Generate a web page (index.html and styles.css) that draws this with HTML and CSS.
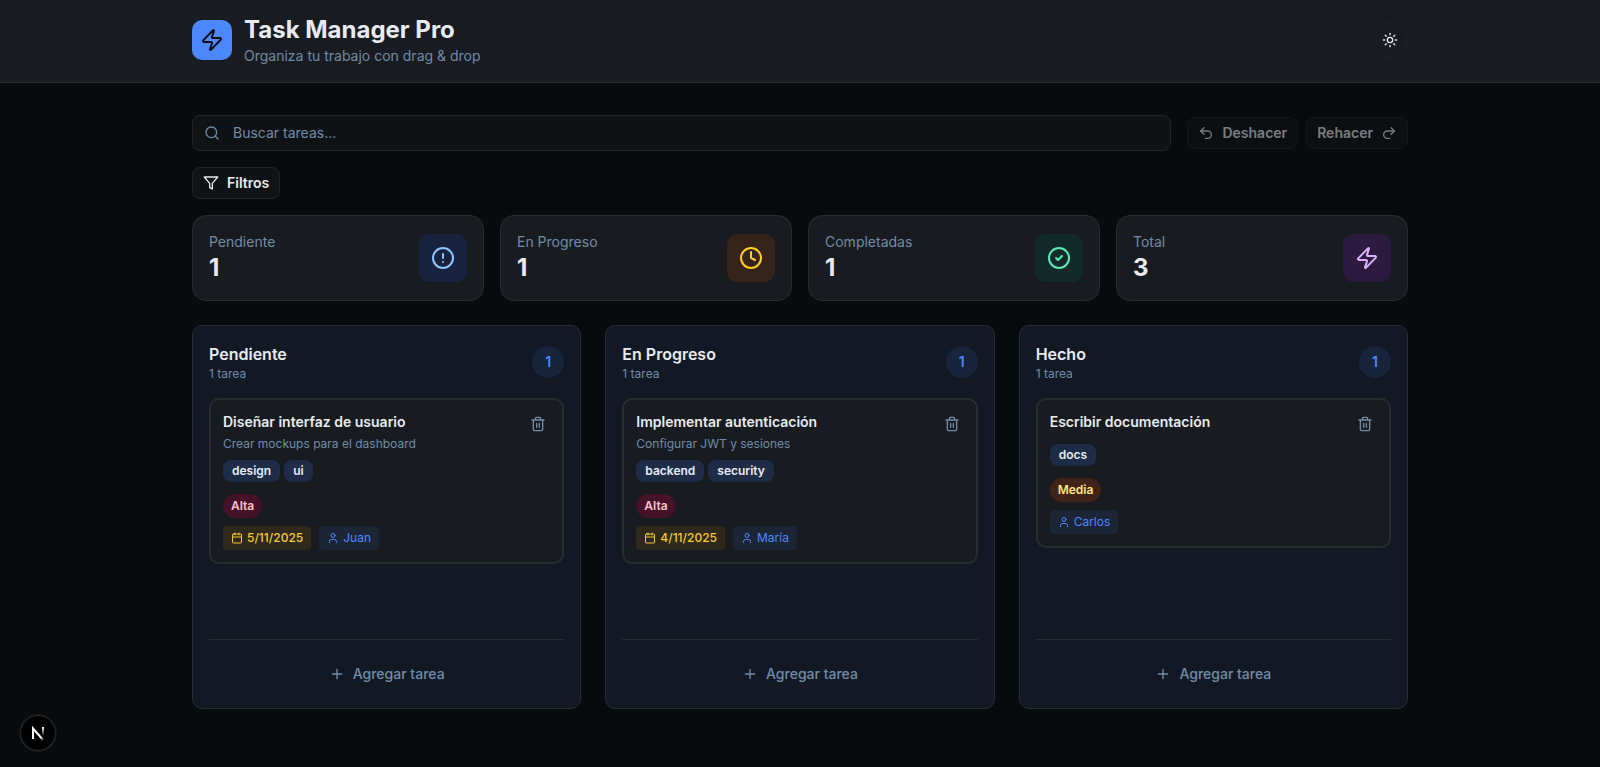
FILE: index.html
```html
<!DOCTYPE html>
<html lang="es">
<head>
    <meta charset="UTF-8">
    <meta name="viewport" content="width=device-width, initial-scale=1.0">
    <title>Task Manager Pro</title>
    <link rel="stylesheet" href="styles.css">
</head>
<body>
    <!-- Icons shared by the page -->
    <svg class="sprite" aria-hidden="true">
        <symbol id="zap" viewBox="0 0 24 24"><path d="M4 14a1 1 0 0 1-.78-1.63l9.9-10.2a.5.5 0 0 1 .86.46l-1.92 6.02A1 1 0 0 0 13 10h7a1 1 0 0 1 .78 1.63l-9.9 10.2a.5.5 0 0 1-.86-.46l1.92-6.02A1 1 0 0 0 11 14z"/></symbol>
        <symbol id="trash" viewBox="0 0 24 24"><path d="M3 6h18M19 6v14a2 2 0 0 1-2 2H7a2 2 0 0 1-2-2V6M8 6V4a2 2 0 0 1 2-2h4a2 2 0 0 1 2 2v2M10 11v6M14 11v6"/></symbol>
        <symbol id="calendar" viewBox="0 0 24 24"><path d="M8 2v4M16 2v4M3 10h18"/><rect x="3" y="4" width="18" height="18" rx="2"/></symbol>
        <symbol id="user" viewBox="0 0 24 24"><circle cx="12" cy="7" r="4"/><path d="M19 21v-2a4 4 0 0 0-4-4H9a4 4 0 0 0-4 4v2"/></symbol>
        <symbol id="plus" viewBox="0 0 24 24"><path d="M5 12h14M12 5v14"/></symbol>
    </svg>

    <header class="header">
        <div class="container header-inner">
            <div class="brand">
                <div class="logo"><svg class="icon icon-lg"><use href="#zap"/></svg></div>
                <div>
                    <h1 class="title">Task Manager Pro</h1>
                    <p class="subtitle">Organiza tu trabajo con drag &amp; drop</p>
                </div>
            </div>
            <button class="theme-toggle" type="button" aria-label="Cambiar tema">
                <svg class="icon" viewBox="0 0 24 24"><circle cx="12" cy="12" r="4"/><path d="M12 2v2M12 20v2M4.93 4.93l1.41 1.41M17.66 17.66l1.41 1.41M2 12h2M20 12h2M6.34 17.66l-1.41 1.41M19.07 4.93l-1.41 1.41"/></svg>
            </button>
        </div>
    </header>

    <main class="container main">
        <div class="toolbar">
            <label class="search">
                <svg class="icon" viewBox="0 0 24 24"><circle cx="11" cy="11" r="8"/><path d="m21 21-4.34-4.34"/></svg>
                <input type="text" placeholder="Buscar tareas..." aria-label="Buscar tareas">
            </label>
            <div class="history">
                <button class="btn" type="button" disabled>
                    <svg class="icon" viewBox="0 0 24 24"><path d="M9 14 4 9l5-5"/><path d="M4 9h10.5a5.5 5.5 0 0 1 0 11H11"/></svg>
                    Deshacer
                </button>
                <button class="btn" type="button" disabled>
                    Rehacer
                    <svg class="icon" viewBox="0 0 24 24"><path d="m15 14 5-5-5-5"/><path d="M20 9H9.5a5.5 5.5 0 0 0 0 11H13"/></svg>
                </button>
            </div>
        </div>

        <button class="btn filters" type="button">
            <svg class="icon" viewBox="0 0 24 24"><path d="M22 3H2l8 9.46V19l4 2v-8.54z"/></svg>
            Filtros
        </button>

        <section class="stats">
            <div class="stat">
                <div>
                    <p class="stat-label">Pendiente</p>
                    <p class="stat-value">1</p>
                </div>
                <div class="stat-icon blue"><svg class="icon" viewBox="0 0 24 24"><circle cx="12" cy="12" r="10"/><path d="M12 8v4M12 16h.01"/></svg></div>
            </div>
            <div class="stat">
                <div>
                    <p class="stat-label">En Progreso</p>
                    <p class="stat-value">1</p>
                </div>
                <div class="stat-icon amber"><svg class="icon" viewBox="0 0 24 24"><circle cx="12" cy="12" r="10"/><path d="M12 6v6l4 2"/></svg></div>
            </div>
            <div class="stat">
                <div>
                    <p class="stat-label">Completadas</p>
                    <p class="stat-value">1</p>
                </div>
                <div class="stat-icon green"><svg class="icon" viewBox="0 0 24 24"><circle cx="12" cy="12" r="10"/><path d="m9 12 2 2 4-4"/></svg></div>
            </div>
            <div class="stat">
                <div>
                    <p class="stat-label">Total</p>
                    <p class="stat-value">3</p>
                </div>
                <div class="stat-icon purple"><svg class="icon"><use href="#zap"/></svg></div>
            </div>
        </section>

        <section class="board">
            <div class="column">
                <div class="column-header">
                    <div>
                        <h2 class="column-title">Pendiente</h2>
                        <p class="column-sub">1 tarea</p>
                    </div>
                    <span class="count">1</span>
                </div>
                <div class="tasks">
                    <article class="task">
                        <div class="task-top">
                            <div>
                                <h3 class="task-title">Diseñar interfaz de usuario</h3>
                                <p class="task-desc">Crear mockups para el dashboard</p>
                            </div>
                            <button class="delete" type="button" aria-label="Eliminar tarea"><svg class="icon"><use href="#trash"/></svg></button>
                        </div>
                        <div class="tags"><span class="tag">design</span><span class="tag">ui</span></div>
                        <span class="priority high">Alta</span>
                        <div class="meta">
                            <span class="chip date"><svg class="icon icon-sm"><use href="#calendar"/></svg>5/11/2025</span>
                            <span class="chip person"><svg class="icon icon-sm"><use href="#user"/></svg>Juan</span>
                        </div>
                    </article>
                </div>
                <div class="column-footer">
                    <button class="add" type="button"><svg class="icon"><use href="#plus"/></svg>Agregar tarea</button>
                </div>
            </div>

            <div class="column">
                <div class="column-header">
                    <div>
                        <h2 class="column-title">En Progreso</h2>
                        <p class="column-sub">1 tarea</p>
                    </div>
                    <span class="count">1</span>
                </div>
                <div class="tasks">
                    <article class="task">
                        <div class="task-top">
                            <div>
                                <h3 class="task-title">Implementar autenticación</h3>
                                <p class="task-desc">Configurar JWT y sesiones</p>
                            </div>
                            <button class="delete" type="button" aria-label="Eliminar tarea"><svg class="icon"><use href="#trash"/></svg></button>
                        </div>
                        <div class="tags"><span class="tag">backend</span><span class="tag">security</span></div>
                        <span class="priority high">Alta</span>
                        <div class="meta">
                            <span class="chip date"><svg class="icon icon-sm"><use href="#calendar"/></svg>4/11/2025</span>
                            <span class="chip person"><svg class="icon icon-sm"><use href="#user"/></svg>María</span>
                        </div>
                    </article>
                </div>
                <div class="column-footer">
                    <button class="add" type="button"><svg class="icon"><use href="#plus"/></svg>Agregar tarea</button>
                </div>
            </div>

            <div class="column">
                <div class="column-header">
                    <div>
                        <h2 class="column-title">Hecho</h2>
                        <p class="column-sub">1 tarea</p>
                    </div>
                    <span class="count">1</span>
                </div>
                <div class="tasks">
                    <article class="task">
                        <div class="task-top">
                            <div>
                                <h3 class="task-title">Escribir documentación</h3>
                            </div>
                            <button class="delete" type="button" aria-label="Eliminar tarea"><svg class="icon"><use href="#trash"/></svg></button>
                        </div>
                        <div class="tags"><span class="tag">docs</span></div>
                        <span class="priority medium">Media</span>
                        <div class="meta">
                            <span class="chip person"><svg class="icon icon-sm"><use href="#user"/></svg>Carlos</span>
                        </div>
                    </article>
                </div>
                <div class="column-footer">
                    <button class="add" type="button"><svg class="icon"><use href="#plus"/></svg>Agregar tarea</button>
                </div>
            </div>
        </section>
    </main>

    <button class="dev-badge" type="button" aria-label="Herramientas de desarrollo">
        <svg width="16" height="16" viewBox="0 0 16 16" fill="none">
            <defs>
                <linearGradient id="fadeDiagonal" x1="8" y1="8" x2="14" y2="15" gradientUnits="userSpaceOnUse"><stop stop-color="#fff"/><stop offset="0.6" stop-color="#fff"/><stop offset="1" stop-color="#fff" stop-opacity="0"/></linearGradient>
                <linearGradient id="fadeStem" x1="0" y1="2" x2="0" y2="11" gradientUnits="userSpaceOnUse"><stop stop-color="#fff"/><stop offset="1" stop-color="#fff" stop-opacity="0"/></linearGradient>
            </defs>
            <path d="M3 14V3.500L13.500 15.500" stroke="url(#fadeDiagonal)" stroke-width="2"/>
            <path d="M13 2v9" stroke="url(#fadeStem)" stroke-width="2"/>
        </svg>
    </button>
</body>
</html>
```
FILE: styles.css
```css
* {
    box-sizing: border-box;
}
body {
    margin: 0;
    min-height: 100vh;
    background-color: #070b0e;
    color: #e8ecf2;
    font-family: Inter, "Liberation Sans", sans-serif;
    font-size: 14px;
    line-height: 20px;
}
h1, h2, h3, p {
    margin: 0;
}
button, input {
    font: inherit;
    color: inherit;
}
button {
    cursor: pointer;
}
.sprite {
    display: none;
}
.icon {
    width: 16px;
    height: 16px;
    flex-shrink: 0;
    fill: none;
    stroke: currentColor;
    stroke-width: 2;
    stroke-linecap: round;
    stroke-linejoin: round;
}
.icon-lg {
    width: 24px;
    height: 24px;
}
.icon-sm {
    width: 12px;
    height: 12px;
}
.container {
    max-width: 1280px;
    margin: 0 auto;
    padding: 0 32px;
}

/* Header */
.header {
    background-color: #181b1f;
    border-bottom: 1px solid #2a2d30;
    padding: 14px 0 16px;
}
.header-inner, .brand {
    display: flex;
    align-items: center;
}
.header-inner {
    justify-content: space-between;
}
.brand {
    gap: 12px;
}
.logo {
    display: flex;
    align-items: center;
    justify-content: center;
    width: 40px;
    height: 40px;
    border-radius: 10px;
    background-color: #4b88ff;
    color: #070b0e;
}
.title {
    font-size: 24px;
    line-height: 32px;
    font-weight: 700;
}
.subtitle, .stat-label {
    color: #718ca8;
}
.theme-toggle {
    display: flex;
    align-items: center;
    justify-content: center;
    width: 36px;
    height: 36px;
    padding: 0;
    border: 1px solid #1f2226;
    border-radius: 50%;
    background-color: #181b1f;
}

/* Search, history and filters */
.main {
    display: flex;
    flex-direction: column;
    gap: 16px;
    padding-top: 32px;
    padding-bottom: 32px;
}
.toolbar {
    display: flex;
    align-items: center;
    gap: 16px;
}
.search {
    display: flex;
    flex: 1;
    align-items: center;
    gap: 13px;
    height: 36px;
    padding: 0 11px;
    border: 1px solid #212528;
    border-radius: 8px;
    background-color: #0f1315;
    color: #718ca8;
}
.search input {
    flex: 1;
    min-width: 0;
    padding: 0;
    border: none;
    outline: none;
    background: none;
    color: #e8ecf2;
}
.search input::placeholder {
    color: #718ca8;
}
.history {
    display: flex;
    gap: 8px;
}
.btn {
    display: flex;
    align-items: center;
    gap: 8px;
    height: 32px;
    padding: 0 10px;
    border: 1px solid #212528;
    border-radius: 8px;
    background-color: #0f1315;
    font-weight: 600;
}
.btn:disabled {
    opacity: 0.5;
    cursor: default;
}
.filters {
    align-self: flex-start;
}

/* Stats */
.stats {
    display: grid;
    grid-template-columns: repeat(4, 1fr);
    gap: 16px;
}
.stat {
    display: flex;
    align-items: center;
    justify-content: space-between;
    padding: 16px;
    border: 1px solid #2a2d30;
    border-radius: 14px;
    background-color: #181b1f;
}
.stat-value {
    font-size: 24px;
    line-height: 32px;
    font-weight: 700;
}
.stat-icon {
    display: flex;
    padding: 12px;
    border-radius: 10px;
}
.stat-icon .icon {
    width: 24px;
    height: 24px;
}
.blue {
    background-color: #192340;
    color: #8ec5ff;
}
.amber {
    background-color: #36231a;
    color: #ffcf20;
}
.green {
    background-color: #122a28;
    color: #5ee9b5;
}
.purple {
    background-color: #2c1a3f;
    color: #dab2ff;
}

/* Board */
.board {
    display: grid;
    grid-template-columns: repeat(3, 1fr);
    gap: 24px;
    margin-top: 8px;
}
.column {
    display: flex;
    flex-direction: column;
    gap: 16px;
    min-height: 384px;
    padding: 16px;
    border: 1px solid #2a2d30;
    border-radius: 10px;
    background-color: #121924;
}
.column-header {
    display: flex;
    align-items: center;
    justify-content: space-between;
}
.column-title {
    font-size: 16px;
    line-height: 24px;
    font-weight: 600;
}
.column-sub, .task-desc {
    font-size: 12px;
    line-height: 16px;
    color: #718ca8;
}
.count {
    display: flex;
    align-items: center;
    justify-content: center;
    width: 32px;
    height: 32px;
    border-radius: 50%;
    background-color: #18243c;
    color: #4b88ff;
    font-weight: 600;
}
.tasks {
    flex: 1;
}
.task {
    padding: 12px;
    border: 2px solid #2a2d30;
    border-radius: 10px;
    background-color: #181b1f;
}
.task-top {
    display: flex;
    align-items: flex-start;
    justify-content: space-between;
    gap: 8px;
}
.task-title {
    font-size: 14px;
    line-height: 20px;
    font-weight: 600;
}
.task-desc {
    margin-top: 4px;
}
.delete {
    display: flex;
    padding: 4px;
    border: none;
    background: none;
    color: #718ca8;
}
.tags {
    display: flex;
    flex-wrap: wrap;
    gap: 4px;
    margin: 8px 0 12px;
}
.tag, .priority, .chip {
    font-size: 12px;
    line-height: 16px;
}
.tag {
    padding: 3px 9px;
    border-radius: 8px;
    background-color: #1f2c47;
    font-weight: 600;
}
.priority {
    display: inline-block;
    padding: 4px 8px;
    border-radius: 12px;
    font-weight: 600;
    vertical-align: top;
}
.high {
    background-color: #451328;
    color: #ffc0cb;
}
.medium {
    background-color: #412417;
    color: #fee685;
}
.meta {
    display: flex;
    flex-wrap: wrap;
    gap: 8px;
    margin-top: 8px;
}
.chip {
    display: flex;
    align-items: center;
    gap: 4px;
    padding: 4px 8px;
    border-radius: 4px;
}
.date {
    background-color: #2f281d;
    color: #f5ca2c;
    font-weight: 500;
}
.person {
    background-color: #1c2536;
    color: #4b88ff;
}
.column-footer {
    padding-top: 16px;
    border-top: 1px solid #252b35;
}
.add {
    display: flex;
    align-items: center;
    justify-content: center;
    gap: 8px;
    width: 100%;
    height: 36px;
    border: none;
    border-radius: 8px;
    background: none;
    color: #718ca8;
    font-weight: 500;
}

/* Floating badge over the page */
.dev-badge {
    position: fixed;
    left: 20px;
    bottom: 16px;
    display: flex;
    align-items: center;
    justify-content: center;
    width: 36px;
    height: 36px;
    padding: 0;
    border: none;
    border-radius: 50%;
    background-color: #000;
    box-shadow: 0 0 0 1px #171717, inset 0 0 0 1px #2b2b2b;
}
```
